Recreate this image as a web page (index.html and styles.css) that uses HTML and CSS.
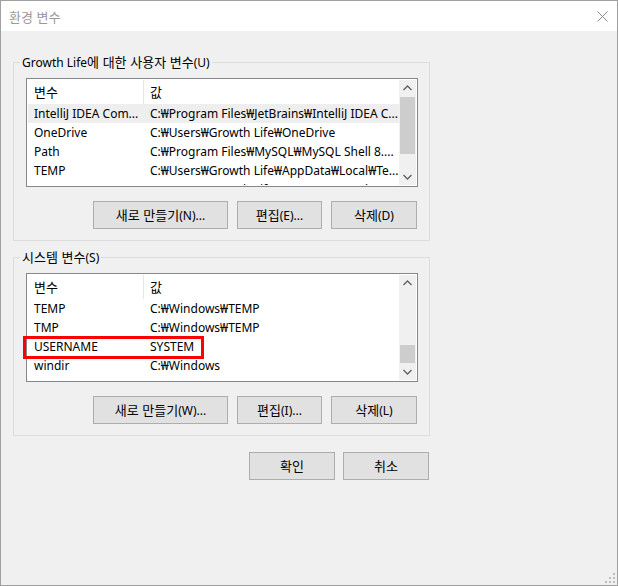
FILE: index.html
```html
<!DOCTYPE html>
<html lang="ko">
<head>
  <meta charset="UTF-8">
  <meta name="viewport" content="width=device-width, initial-scale=1.0">
  <title>환경 변수</title>
  <link rel="stylesheet" href="styles.css">
</head>
<body>
  <div class="window">
    <div class="titlebar">
      <span class="title ko">환경 변수</span>
      <svg class="close" width="11" height="11" viewBox="0 0 11 11">
        <path d="M0.5 0.5 L10.5 10.5 M10.5 0.5 L0.5 10.5" stroke="#8a8a8a" stroke-width="1" fill="none"/>
      </svg>
    </div>

    <div class="content">
      <div class="group">
        <div class="group-title">Growth Life<span class="ko">에 대한 사용자 변수</span>(U)</div>
        <div class="listbox">
          <div class="list">
            <div class="row head"><span class="name ko">변수</span><span class="value ko">값</span></div>
            <div class="row selected"><span class="name">IntelliJ IDEA Com...</span><span class="value">C:₩Program Files₩JetBrains₩IntelliJ IDEA C...</span></div>
            <div class="row"><span class="name">OneDrive</span><span class="value">C:₩Users₩Growth Life₩OneDrive</span></div>
            <div class="row"><span class="name">Path</span><span class="value">C:₩Program Files₩MySQL₩MySQL Shell 8....</span></div>
            <div class="row"><span class="name">TEMP</span><span class="value">C:₩Users₩Growth Life₩AppData₩Local₩Te...</span></div>
            <div class="row"><span class="name">TMP</span><span class="value">C:₩Users₩Growth Life₩AppData₩Local₩Te...</span></div>
          </div>
          <div class="scrollbar">
            <div class="arrow">
              <svg width="17" height="17" viewBox="0 0 17 17"><path d="M4.5 10 L8.5 6 L12.5 10" stroke="#606060" stroke-width="1.3" fill="none"/></svg>
            </div>
            <div class="track"><div class="thumb" style="height: 57px;"></div></div>
            <div class="arrow">
              <svg width="17" height="17" viewBox="0 0 17 17"><path d="M4.5 7 L8.5 11 L12.5 7" stroke="#606060" stroke-width="1.3" fill="none"/></svg>
            </div>
          </div>
        </div>
        <div class="buttons">
          <button class="btn btn-wide"><span class="ko">새로 만들기</span>(N)...</button>
          <button class="btn btn-edit"><span class="ko">편집</span>(E)...</button>
          <button class="btn"><span class="ko">삭제</span>(D)</button>
        </div>
      </div>

      <div class="group group-system">
        <div class="group-title"><span class="ko">시스템 변수</span>(S)</div>
        <div class="listbox">
          <div class="list">
            <div class="row head"><span class="name ko">변수</span><span class="value ko">값</span></div>
            <div class="row"><span class="name">TEMP</span><span class="value">C:₩Windows₩TEMP</span></div>
            <div class="row"><span class="name">TMP</span><span class="value">C:₩Windows₩TEMP</span></div>
            <div class="row"><span class="name">USERNAME</span><span class="value">SYSTEM</span></div>
            <div class="row"><span class="name">windir</span><span class="value">C:₩Windows</span></div>
          </div>
          <div class="scrollbar at-end">
            <div class="arrow">
              <svg width="17" height="17" viewBox="0 0 17 17"><path d="M4.5 10 L8.5 6 L12.5 10" stroke="#606060" stroke-width="1.3" fill="none"/></svg>
            </div>
            <div class="track"><div class="thumb" style="height: 18px;"></div></div>
            <div class="arrow">
              <svg width="17" height="17" viewBox="0 0 17 17"><path d="M4.5 7 L8.5 11 L12.5 7" stroke="#606060" stroke-width="1.3" fill="none"/></svg>
            </div>
          </div>
          <!-- highlight box drawn over the USERNAME row -->
          <div class="mark"></div>
        </div>
        <div class="buttons">
          <button class="btn btn-wide"><span class="ko">새로 만들기</span>(W)...</button>
          <button class="btn btn-edit"><span class="ko">편집</span>(I)...</button>
          <button class="btn"><span class="ko">삭제</span>(L)</button>
        </div>
      </div>

      <div class="footer">
        <button class="btn ko">확인</button>
        <button class="btn ko">취소</button>
      </div>
    </div>

    <svg class="grip" width="10" height="10" viewBox="0 0 10 10" fill="#bdbdbd">
      <rect x="8" y="0" width="2" height="2"/>
      <rect x="4" y="4" width="2" height="2"/>
      <rect x="8" y="4" width="2" height="2"/>
      <rect x="0" y="8" width="2" height="2"/>
      <rect x="4" y="8" width="2" height="2"/>
      <rect x="8" y="8" width="2" height="2"/>
    </svg>
  </div>
</body>
</html>
```

FILE: styles.css
```css
body {
  margin: 0;
  background-color: #f0f0f0;
  font-family: "Noto Sans", "Noto Sans CJK KR", sans-serif;
  font-size: 12px;
  color: #000;
}
/* hangul looks a size bigger than the latin text in the dialog */
.ko {
  font-family: "Noto Sans CJK KR", sans-serif;
  font-size: 13px;
}
.window {
  position: relative;
  width: 618px;
  height: 586px;
  box-sizing: border-box;
  border: 1px solid #a0a0a0;
  background-color: #f0f0f0;
}
.titlebar {
  display: flex;
  align-items: center;
  height: 30px;
  padding: 0 9px 0 8px;
  background-color: #fff;
}
.title {
  color: #999;
}
.close {
  margin-left: auto;
}
.content {
  padding: 0 12px;
}
.group {
  width: 417px;
  box-sizing: border-box;
  margin-top: 31px;
  padding: 0 11px 11px 12px;
  border: 1px solid #dcdcdc;
}
.group-system {
  margin-top: 16px;
}
.group-title {
  width: fit-content;
  height: 16px;
  margin: -9px 0 0 -6px;
  padding: 0 2px;
  line-height: 16px;
  white-space: nowrap;
  background-color: #f0f0f0;
}
.listbox {
  position: relative;
  display: flex;
  height: 109px;
  box-sizing: border-box;
  margin-top: 8px;
  padding: 1px;
  border: 1px solid #828790;
  background-color: #fff;
}
.list {
  flex: 1;
  overflow: hidden;
}
.row {
  display: flex;
  height: 19px;
  line-height: 19px;
  white-space: nowrap;
}
.row.head {
  height: 24px;
  line-height: 24px;
}
.row.selected {
  background-color: #eeeeee;
}
.name {
  width: 116px;
  flex-shrink: 0;
  box-sizing: border-box;
  padding-left: 6px;
  overflow: hidden;
}
.head .name {
  border-right: 1px solid #e5e5e5;
}
.value {
  flex: 1;
  padding-left: 6px;
  overflow: hidden;
}
.scrollbar {
  display: flex;
  flex-direction: column;
  width: 17px;
  background-color: #f0f0f0;
}
.arrow {
  height: 17px;
}
.arrow svg {
  display: block;
}
.track {
  flex: 1;
  display: flex;
  flex-direction: column;
}
.at-end .track {
  justify-content: flex-end;
}
.thumb {
  margin: 0 1px;
  background-color: #cdcdcd;
}
.mark {
  position: absolute;
  left: -4px;
  top: 62px;
  width: 181px;
  height: 23px;
  box-sizing: border-box;
  border: 3px solid #ff0000;
}
.buttons {
  display: flex;
  justify-content: flex-end;
  gap: 9px;
  margin-top: 14px;
  padding-right: 1px;
}
.btn {
  width: 86px;
  height: 28px;
  padding: 0;
  border: 1px solid #adadad;
  background-color: #e1e1e1;
  font-family: inherit;
  font-size: 12px;
  line-height: 16px;
  color: #000;
}
.btn.ko {
  font-family: "Noto Sans CJK KR", sans-serif;
  font-size: 13px;
}
.btn-wide {
  width: 135px;
}
.btn-edit {
  width: 85px;
}
.footer {
  display: flex;
  justify-content: flex-end;
  gap: 8px;
  width: 417px;
  box-sizing: border-box;
  margin-top: 16px;
  padding-right: 1px;
}
.grip {
  position: absolute;
  right: 2px;
  bottom: 2px;
}
```
